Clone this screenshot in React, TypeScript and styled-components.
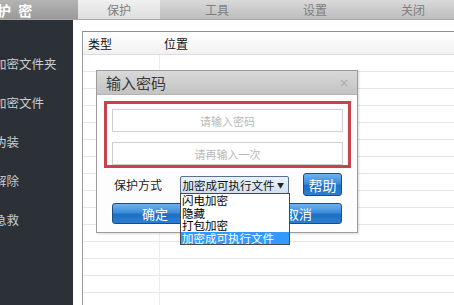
import React from "react";
import styled, { createGlobalStyle } from "styled-components";

const GlobalStyle = createGlobalStyle`
  html, body {
    margin: 0;
    padding: 0;
    background: #ffffff;
  }
  body {
    font-family: "Liberation Sans", "Noto Sans CJK SC", sans-serif;
  }
`;

const Screen = styled.div`
  width: 454px;
  height: 305px;
  overflow: hidden;
  display: flex;
  flex-direction: column;
  background: #ffffff;
`;

const TopBar = styled.div`
  height: 19px;
  flex-shrink: 0;
  display: flex;
  align-items: stretch;
  background: linear-gradient(to bottom, #d9d9d9, #bdbdbd);
  border-bottom: 1px solid #a8a8a8;
`;

const Brand = styled.div`
  width: 81px;
  display: flex;
  align-items: center;
  font-family: "Noto Sans CJK SC", sans-serif;
  font-weight: 700;
  font-size: 14px;
  color: #ffffff;
  background: linear-gradient(to bottom, #b4b4b4, #9a9a9a);
  letter-spacing: 2px;
  text-indent: -3px;
  white-space: pre;
  overflow: hidden;
`;

const Tabs = styled.div`
  flex: 1;
  display: flex;
  gap: 16px;
`;

const Tab = styled.div<{ $active?: boolean }>`
  width: 82px;
  flex-shrink: 0;
  display: flex;
  align-items: center;
  justify-content: center;
  font-family: "Noto Sans CJK SC", sans-serif;
  font-size: 12px;
  color: #7e7e7e;
  background: ${(p) =>
    p.$active ? "linear-gradient(to bottom, #f0f0f0, #dedede)" : "transparent"};
`;

const Body = styled.div`
  flex: 1;
  display: flex;
  min-height: 0;
`;

const Sidebar = styled.div`
  width: 73px;
  flex-shrink: 0;
  background: #2c3037;
  padding-top: 24px;
  box-sizing: border-box;
  overflow: hidden;
`;

const SideItem = styled.div`
  height: 39px;
  line-height: 39px;
  margin-left: -6px;
  font-family: "Noto Sans CJK SC", sans-serif;
  font-size: 12.5px;
  color: #c9cbce;
  white-space: nowrap;
`;

const Main = styled.div`
  flex: 1;
  padding: 11px 0 0 9px;
  min-width: 0;
`;

const ListPanel = styled.div`
  position: relative;
  height: 100%;
  margin-right: -10px;
  border-left: 1px solid #9a9a9a;
  border-top: 1px solid #8e8e8e;
  display: flex;
  flex-direction: column;
`;

const HeaderRow = styled.div`
  height: 22px;
  display: flex;
  background: linear-gradient(to bottom, #ffffff, #f1f1f1);
  border-bottom: 1px solid #dcdcdc;
`;

const HeaderCell = styled.div<{ $w?: number }>`
  width: ${(p) => (p.$w ? `${p.$w}px` : "auto")};
  flex: ${(p) => (p.$w ? "none" : 1)};
  padding-left: ${(p) => (p.$w ? "5px" : "4px")};
  display: flex;
  align-items: center;
  font-family: "Noto Sans CJK SC", sans-serif;
  font-size: 12px;
  color: #111;
  box-sizing: border-box;
`;

const Rows = styled.div`
  flex: 1;
  background-image: linear-gradient(to right, transparent 76px, #ececec 76px, #ececec 77px, transparent 77px),
    repeating-linear-gradient(to bottom, transparent 0, transparent 16px, #e6e6e6 16px, #e6e6e6 17px);
`;

const Dialog = styled.div`
  position: absolute;
  left: 13px;
  top: 38px;
  width: 262px;
  height: 163px;
  box-sizing: border-box;
  border: 1px solid #9c9c9c;
  background: #fdfdfd;
  box-shadow: 1px 1px 2px rgba(0, 0, 0, 0.15);
  display: flex;
  flex-direction: column;
`;

const TitleBar = styled.div`
  height: 23px;
  display: flex;
  align-items: center;
  justify-content: space-between;
  padding: 0 8px 0 9px;
  background: linear-gradient(to bottom, #d9d9d9, #c3c3c3);
  border-bottom: 1px solid #b4b4b4;
`;

const Title = styled.span`
  font-family: "Noto Sans CJK SC", sans-serif;
  font-size: 15px;
  color: #3a3a3a;
`;

const Close = styled.span`
  font-family: "DejaVu Sans", sans-serif;
  font-size: 12px;
  color: #a8a8a8;
`;

const DialogBody = styled.div`
  padding: 6px 15px 0 7px;
  display: flex;
  flex-direction: column;
`;

const RedBox = styled.div`
  width: 247px;
  height: 67px;
  box-sizing: border-box;
  border: 3px solid #c6434c;
  background: #ffffff;
  padding: 5px 5px 0 5px;
  display: flex;
  flex-direction: column;
  gap: 10px;
`;

const PwdInput = styled.div`
  height: 21px;
  border: 1px solid #cfcfcf;
  display: flex;
  align-items: center;
  justify-content: center;
  font-family: "Noto Sans CJK SC", sans-serif;
  font-size: 11px;
  color: #b8b8b8;
  background: #ffffff;
`;

const OptionRow = styled.div`
  position: relative;
  display: flex;
  align-items: center;
  height: 23px;
  margin-top: 5px;
  padding-left: 10px;
`;

const Label = styled.span`
  width: 66px;
  font-family: "Noto Sans CJK SC", sans-serif;
  font-size: 12px;
  color: #222;
`;

const Select = styled.div`
  width: 110px;
  height: 18px;
  box-sizing: border-box;
  border: 1px solid #5a6f8c;
  border-radius: 2px;
  background: linear-gradient(to bottom, #eaf3fc, #cfe0f2);
  display: flex;
  align-items: center;
  justify-content: space-between;
  padding: 0 4px 0 2px;
  font-family: "Noto Sans CJK SC", sans-serif;
  font-size: 11.5px;
  color: #111;
  white-space: nowrap;
  overflow: hidden;
`;

const Caret = styled.span`
  font-size: 7px;
  color: #222;
`;

const BlueButton = styled.div<{ $w: number; $h: number; $size: number }>`
  width: ${(p) => p.$w}px;
  height: ${(p) => p.$h}px;
  box-sizing: border-box;
  border: 1px solid #1d4c80;
  border-radius: 3px;
  background: linear-gradient(to bottom, #6fb2ee 0%, #3a8ddc 45%, #1f6fc4 55%, #2a7fd2 100%);
  display: flex;
  align-items: center;
  justify-content: center;
  font-family: "Noto Sans CJK SC", sans-serif;
  font-size: ${(p) => p.$size}px;
  color: #ffffff;
`;

const HelpSlot = styled.div`
  margin-left: 14px;
`;

const ButtonRow = styled.div`
  display: flex;
  justify-content: space-between;
  margin-top: 7px;
  padding-left: 8px;
`;

const DropList = styled.div`
  position: absolute;
  left: 76px;
  top: 20px;
  width: 110px;
  box-sizing: border-box;
  border: 1px solid #4a4a4a;
  background: #ffffff;
  z-index: 2;
`;

const DropItem = styled.div<{ $selected?: boolean }>`
  height: 12.5px;
  line-height: 12.5px;
  padding-left: 1px;
  font-family: "Noto Sans CJK SC", sans-serif;
  font-size: 11.5px;
  white-space: nowrap;
  overflow: hidden;
  color: ${(p) => (p.$selected ? "#ffffff" : "#000000")};
  background: ${(p) => (p.$selected ? "#3399ff" : "transparent")};
`;

const sideItems = ["加密文件夹", "加密文件", "伪装", "解除", "急救"];
const tabs = ["保护", "工具", "设置", "关闭"];
const options = ["闪电加密", "隐藏", "打包加密", "加密成可执行文件"];

export default function App() {
  return (
    <Screen>
      <GlobalStyle />
      <TopBar>
        <Brand>护 密</Brand>
        <Tabs>
          {tabs.map((t, i) => (
            <Tab key={t} $active={i === 0}>
              {t}
            </Tab>
          ))}
        </Tabs>
      </TopBar>
      <Body>
        <Sidebar>
          {sideItems.map((s) => (
            <SideItem key={s}>{s}</SideItem>
          ))}
        </Sidebar>
        <Main>
          <ListPanel>
            <HeaderRow>
              <HeaderCell $w={77}>类型</HeaderCell>
              <HeaderCell>位置</HeaderCell>
            </HeaderRow>
            <Rows />
            <Dialog>
              <TitleBar>
                <Title>输入密码</Title>
                <Close>×</Close>
              </TitleBar>
              <DialogBody>
                <RedBox>
                  <PwdInput>请输入密码</PwdInput>
                  <PwdInput>请再输入一次</PwdInput>
                </RedBox>
                <OptionRow>
                  <Label>保护方式</Label>
                  <Select>
                    <span>加密成可执行文件</span>
                    <Caret>▼</Caret>
                  </Select>
                  <HelpSlot>
                    <BlueButton $w={39} $h={23} $size={14}>
                      帮助
                    </BlueButton>
                  </HelpSlot>
                  <DropList>
                    {options.map((o, i) => (
                      <DropItem key={o} $selected={i === options.length - 1}>
                        {o}
                      </DropItem>
                    ))}
                  </DropList>
                </OptionRow>
                <ButtonRow>
                  <BlueButton $w={86} $h={21} $size={13}>
                    确定
                  </BlueButton>
                  <BlueButton $w={86} $h={21} $size={13}>
                    取消
                  </BlueButton>
                </ButtonRow>
              </DialogBody>
            </Dialog>
          </ListPanel>
        </Main>
      </Body>
    </Screen>
  );
}
